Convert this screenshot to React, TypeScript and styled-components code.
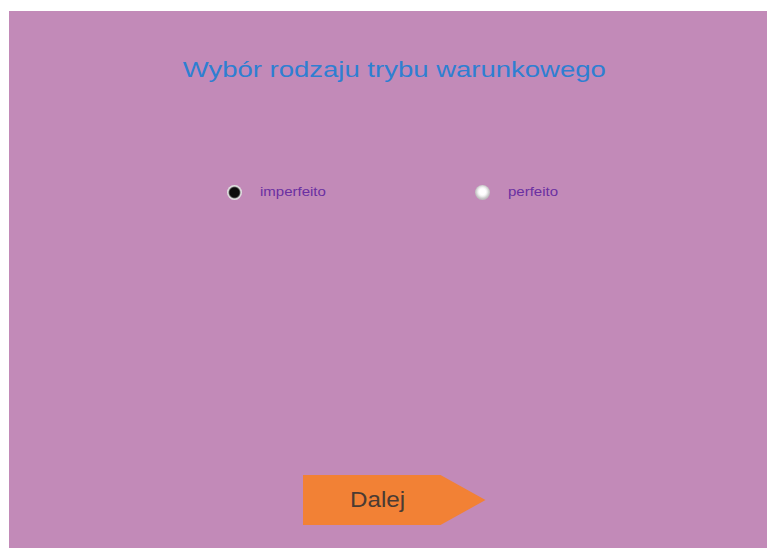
import React, { useState } from "react";
import styled, { createGlobalStyle } from "styled-components";

const GlobalStyle = createGlobalStyle`
  html, body {
    margin: 0;
    padding: 0;
    background: #ffffff;
    font-family: "Liberation Sans", Arial, sans-serif;
  }
`;

const Page = styled.div`
  box-sizing: border-box;
  width: 767px;
  height: 548px;
  padding: 11px 0 0 9px;
  overflow: hidden;
`;

const Panel = styled.main`
  box-sizing: border-box;
  height: 537px;
  width: 758px;
  background: #c28ab8;
  padding: 46px 0 23px 12px;
  display: flex;
  flex-direction: column;
  align-items: center;
`;

const Title = styled.h1`
  margin: 0;
  font-size: 22px;
  line-height: 26px;
  font-weight: normal;
  color: #2e7fd2;
  transform: scaleX(1.25);
  white-space: nowrap;
`;

const Options = styled.div`
  align-self: flex-start;
  margin: 101px 0 0 206px;
  display: flex;
  align-items: center;
`;

const Option = styled.label`
  width: 248px;
  height: 16px;
  display: flex;
  align-items: center;
  cursor: pointer;
`;

const Radio = styled.span<{ $checked: boolean }>`
  flex: none;
  width: 15px;
  height: 15px;
  border-radius: 50%;
  background: ${(p) =>
    p.$checked
      ? "radial-gradient(circle, #0c0c0c 0 4.5px, #3a3a3a 5.2px, #d4d4d4 6.3px, #e8e8e8 7.5px)"
      : "radial-gradient(circle at 50% 45%, #ffffff 0 3px, #f0f0f0 4.5px, #cbcbcb 6.5px, #bdbdbd 7.5px)"};
`;

const Label = styled.span`
  margin-left: 18px;
  font-size: 12px;
  line-height: 15px;
  color: #6a30a2;
  transform: scaleX(1.25);
  transform-origin: left center;
  white-space: nowrap;
`;

const NextButton = styled.button`
  margin-top: auto;
  width: 183px;
  height: 50px;
  border: 0;
  padding: 0 0 0 47px;
  background: #f28135;
  clip-path: polygon(0 0, 138px 0, 183px 50%, 138px 100%, 0 100%);
  display: flex;
  align-items: center;
  justify-content: flex-start;
  font-family: "Liberation Sans", Arial, sans-serif;
  font-size: 22px;
  color: #4a3b33;
  cursor: pointer;
`;

const ButtonText = styled.span`
  display: inline-block;
  transform: scaleX(1.1);
  transform-origin: left center;
`;

const moods = ["imperfeito", "perfeito"];

export default function App() {
  const [mood, setMood] = useState("imperfeito");
  return (
    <>
      <GlobalStyle />
      <Page>
        <Panel>
          <Title>Wybór rodzaju trybu warunkowego</Title>
          <Options>
            {moods.map((m) => (
              <Option key={m} onClick={() => setMood(m)}>
                <Radio $checked={mood === m} />
                <Label>{m}</Label>
              </Option>
            ))}
          </Options>
          <NextButton>
            <ButtonText>Dalej</ButtonText>
          </NextButton>
        </Panel>
      </Page>
    </>
  );
}
